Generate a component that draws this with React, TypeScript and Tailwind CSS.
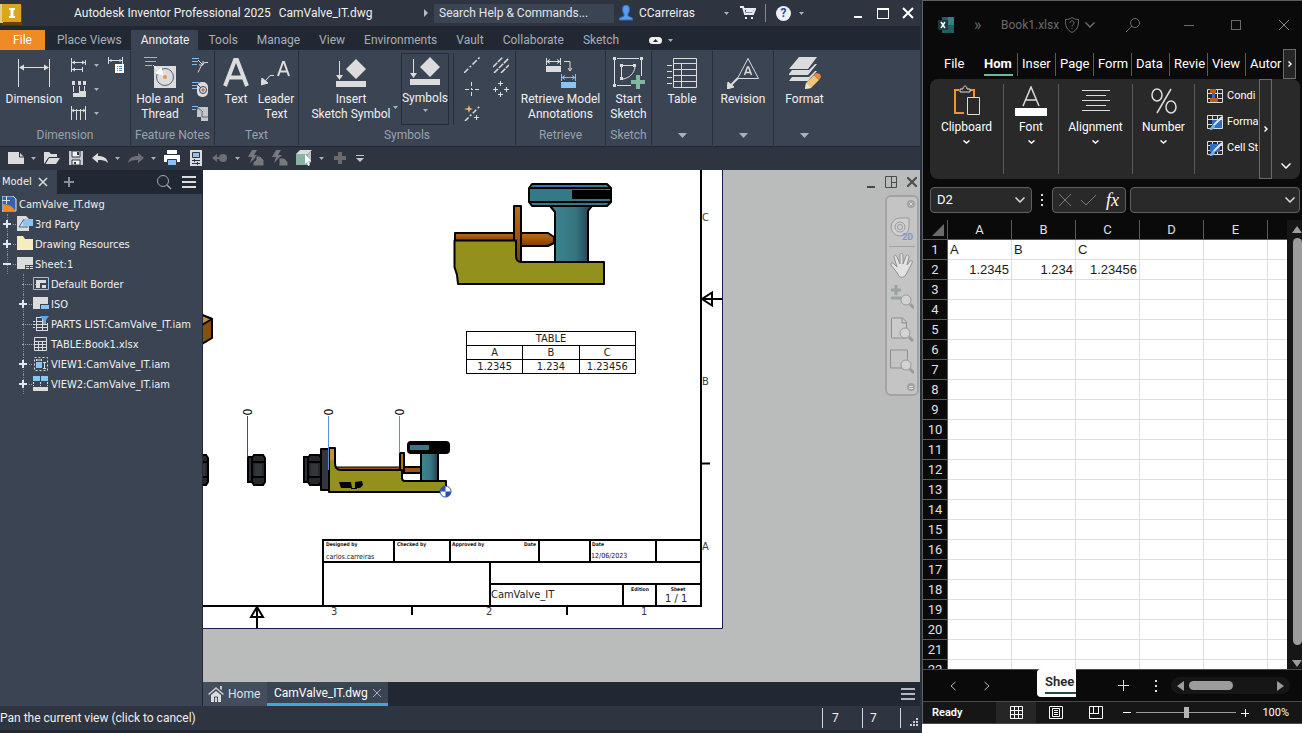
import {ReactNode} from "react";
import clsx from "clsx";

const RIBBON_TABS = ["Place Views", "Annotate", "Tools", "Manage", "View", "Environments", "Vault", "Collaborate", "Sketch"];
const EXCEL_TABS = ["Inser", "Page", "Form", "Data", "Revie", "View", "Autor"];
const SHEET_COLUMNS = ["A", "B", "C", "D", "E"];
const SHEET_ROWS: Record<number, string[]> = {
    1: ["A", "B", "C"],
    2: ["1.2345", "1.234", "1.23456"],
};

type IconProps = {w?: number; h?: number; children: ReactNode; className?: string};

function Icon({w = 16, h = 16, children, className}: IconProps) {
    return (
        <svg
            width={w}
            height={h}
            viewBox={`0 0 ${w} ${h}`}
            fill="none"
            stroke="#dcdcdc"
            aria-hidden="true"
            className={clsx("shrink-0", className)}
        >
            {children}
        </svg>
    );
}

function Caret({className}: {className?: string}) {
    return (
        <svg width="5" height="3" viewBox="0 0 5 3" aria-hidden="true" className={clsx("shrink-0 fill-[#a9b1bd]", className)}>
            <path d="M0 0h5L2.5 3z" />
        </svg>
    );
}

function WideCaret() {
    return (
        <svg width="9" height="5" viewBox="0 0 9 5" aria-hidden="true" className="fill-[#a9b1bd]">
            <path d="M0 0h9L4.500 5z" />
        </svg>
    );
}

function Chevron({className}: {className?: string}) {
    return (
        <svg width="10" height="6" viewBox="0 0 10 6" fill="none" strokeWidth="1.500" aria-hidden="true" className={clsx("shrink-0", className)}>
            <path d="M.5.5 5 5 9.500.5" />
        </svg>
    );
}

/* ---------- Inventor: title bar ---------- */

function TitleBar() {
    return (
        <header className="h-[26px] shrink-0 flex items-center bg-[#2e3440] text-xs text-[#f0f0f0] overflow-hidden">
            <svg width="24" height="26" viewBox="0 0 24 26" aria-hidden="true" className="shrink-0">
                <path d="M0 5h22v20H2z" fill="#6b430c" />
                <path d="M0 4h3v19H0z" fill="#e8c98d" />
                <path d="M2 4h19v18H2z" fill="#dba520" />
                <path d="M9 8h6v2h-1.500v6H15v2H9v-2h1.500v-6H9z" fill="#fff" />
            </svg>
            <div className="flex-1 flex gap-2 pl-[50px] pb-px whitespace-nowrap">
                <span>Autodesk Inventor Professional 2025</span>
                <span>CamValve_IT.dwg</span>
            </div>
            <svg width="4" height="8" viewBox="0 0 4 8" aria-hidden="true" className="mr-[6px] fill-[#b5bbc5]">
                <path d="M0 0v8l4-4z" />
            </svg>
            <input
                aria-label="Search Help & Commands"
                placeholder="Search Help & Commands..."
                className="w-[180px] h-[19px] px-[5px] bg-[#3b4453] placeholder:text-[#e4e6ea] outline-none"
            />
            <button className="w-[120px] pl-[5px] flex items-center gap-[6px]">
                <svg width="14" height="16" viewBox="0 0 14 16" aria-hidden="true">
                    <path d="M3.500 4a3.500 4 0 0 1 7 0c0 3-1 4-1.500 5v2l4.500 2 .5 2H0l.5-2L5 11V9C4.500 8 3.500 7 3.500 4z" fill="#5b9ded" stroke="#2f66c0" />
                </svg>
                CCarreiras
                <Caret className="ml-auto mr-[5px]" />
            </button>
            <button aria-label="Cart" className="w-[31px] pr-1 flex justify-center">
                <Icon>
                    <path d="M0 2h3l2 7h8l2-5H4" strokeWidth="2" stroke="#e8ecf5" />
                    <path d="M6 6h7" stroke="#e8ecf5" strokeWidth="3" />
                    <path d="M5 13h2M11 13h2" strokeWidth="2" stroke="#e8ecf5" />
                </Icon>
            </button>
            <span className="w-px h-[18px] bg-[#858a92]" />
            <button aria-label="Help" className="w-[42px] pl-[10px] flex items-center gap-2">
                <span className="w-[15px] h-[15px] rounded-full bg-[#f0f1f4] text-[#2648a8] text-xs leading-[15px] font-bold">?</span>
                <Caret />
            </button>
            <div className="flex items-center pl-[46px] pr-[6px] gap-[13px]">
                <button aria-label="Minimize" className="w-2 h-[10px] mr-[2px] border-b-2 border-white" />
                <button aria-label="Maximize" className="w-3 h-[11px] border border-t-2 border-white" />
                <button aria-label="Close">
                    <Icon w={12} h={12}>
                        <path d="m1 1 10 10M11 1 1 11" stroke="#fff" strokeWidth="2" />
                    </Icon>
                </button>
            </div>
        </header>
    );
}

function RibbonTabs() {
    return (
        <nav className="flex items-end h-6 shrink-0 bg-[#222833] text-xs text-[#a8aeb8]">
            <button className="w-[45px] mr-[2px] h-5 bg-[#f08a24] text-white">File</button>
            {RIBBON_TABS.map((tab) => (
                <button
                    key={tab}
                    className={clsx("h-5 pl-[10px] pr-[9px] whitespace-nowrap", tab === "Annotate" && "bg-[#3b4453] text-[#f0f0f0]")}
                >
                    {tab}
                </button>
            ))}
            <button aria-label="Ribbon display" className="h-5 pl-[21px] flex items-center gap-[6px]">
                <span className="w-[13px] h-[7px] rounded-sm bg-[#f0f0f0] flex items-center justify-center">
                    <svg width="5" height="3" viewBox="0 0 5 3" aria-hidden="true" className="fill-[#222833]">
                        <path d="M0 3h5L2.500 0z" />
                    </svg>
                </span>
                <Caret />
            </button>
        </nav>
    );
}

/* ---------- Inventor: ribbon ---------- */

function Panel({title, className, children}: {title?: string; className: string; children: ReactNode}) {
    return (
        <section className={clsx("shrink-0 h-[94px] my-px flex flex-col border-r border-[#262d39]", className)}>
            <div className="flex flex-1 pt-[6px]">{children}</div>
            <footer className="h-5 flex items-center justify-center text-[#9aa2ae] leading-4 whitespace-nowrap">
                {title ?? <WideCaret />}
            </footer>
        </section>
    );
}

function BigButton({icon, lines, className}: {icon: ReactNode; lines: string[]; className: string}) {
    return (
        <button className={clsx("flex flex-col items-center text-[#f0f0f0] leading-[15px] whitespace-nowrap", className)}>
            <span className="h-8 mb-[3px] flex items-center">{icon}</span>
            {lines.map((line) => (
                <span key={line}>{line}</span>
            ))}
        </button>
    );
}

const InsertIcon = () => (
    <Icon w={30} h={30}>
        <path d="M3.500 3v16" />
        <path d="M0 17h7l-3.500 5z" fill="#dcdcdc" stroke="none" />
        <path d="m20 1 10 10-10 10-10-10zM0 23h30v6H0z" fill="#dcdcdc" stroke="none" />
    </Icon>
);

function Ribbon() {
    return (
        <div className="flex h-24 shrink-0 bg-[#3b4453] text-xs overflow-hidden">
            <Panel title="Dimension" className="w-[131px]">
                <BigButton
                    className="w-[68px]"
                    lines={["Dimension"]}
                    icon={
                        <Icon w={34} h={32}>
                            <path d="M1.500 2v28M32.500 2v28M3 10.500h28" />
                            <path d="M2 10.500l5-3v6zM32 10.500l-5-3v6z" fill="#dcdcdc" stroke="none" />
                        </Icon>
                    }
                />
                <div className="flex flex-col pl-[3px] gap-2">
                    <div className="flex items-center gap-[7px]">
                        <Icon>
                            <path d="M.5 1v14M.5 5.500h14M.5 12.500h11M14.500 3v5M11.500 10v5" />
                            <path d="M1 5.500l3-2v4zM1 12.500l3-2v4zM14 5.500l-3-2v4z" fill="#dcdcdc" stroke="none" />
                        </Icon>
                        <Caret />
                    </div>
                    <div className="flex items-center gap-[7px]">
                        <Icon>
                            <path d="M1 0h3v4H1zM7 0h3v4H7zM12 0h3v4h-3zM2 16v-4h6v-2h7v6z" fill="#dcdcdc" stroke="none" />
                            <path d="M2.500 5v6M8.500 5v5M13.500 5v5" />
                        </Icon>
                        <Caret />
                    </div>
                    <div className="flex items-center gap-[7px]">
                        <Icon>
                            <path d="M.5 1v14M5.500 4v11M9.500 4v11M14.500 1v14M1 5.500h13" />
                            <path d="m3 4-2 1.500L3 7M12 4l2 1.500L12 7" />
                        </Icon>
                        <Caret />
                    </div>
                </div>
                <Icon className="ml-[9px]">
                    <path d="M.5 0v7M14.500 0v7M1 3.500h13M3 2v3M12 2v3" />
                    <path d="M7 7h9v9H7z" fill="#fff" stroke="none" />
                    <path d="M9 9.500h1m1 0h3M9 11.500h1m1 0h3M9 13.500h1m1 0h3" stroke="#3d8bd8" />
                </Icon>
            </Panel>

            <Panel title="Feature Notes" className="w-[84px]">
                <BigButton
                    className="w-[58px]"
                    lines={["Hole and", "Thread"]}
                    icon={
                        <Icon w={32} h={32}>
                            <path d="M10 9h22v22H10z" fill="#dcdcdc" stroke="none" />
                            <circle cx="21" cy="20" r="8.500" stroke="#56606f" />
                            <circle cx="21" cy="20" r="2" fill="#e09a4e" stroke="none" />
                            <path d="M0 .5h13M1 4.500h11M1 8.500h7" stroke="#7dbdf0" />
                            <path d="m9 8 9 9m-1-6 2 7-7-2z" stroke="#fff" fill="#fff" />
                        </Icon>
                    }
                />
                <div className="flex flex-col gap-2 pl-[3px]">
                    <Icon>
                        <path d="M0 1.500h7M0 4.500h6M0 7.500h5" stroke="#7dbdf0" />
                        <path d="m6 3 5 5m0-4v4H7M16 5.500h-3c-4 2-5 6-7 10" />
                    </Icon>
                    <Icon>
                        <rect x="5" y="1" width="11" height="15" rx="5" fill="#dcdcdc" stroke="none" />
                        <path d="M0 1.500h7M0 4.500h6M0 7.500h5" stroke="#7dbdf0" />
                        <circle cx="11" cy="9" r="3.500" stroke="#3b4453" />
                        <path d="M9 9h4M11 7v4" stroke="#c9541e" />
                        <path d="m5 3 4 4" stroke="#3b4453" />
                    </Icon>
                    <Icon>
                        <path d="M6 2h10v14H9v-4H5V6z" fill="#c4c6c9" stroke="none" />
                        <path d="M0 1.500h6M0 4.500h4" stroke="#7dbdf0" />
                        <path d="m5 2 6 5M10 7v5h6" stroke="#5c6470" />
                    </Icon>
                </div>
            </Panel>

            <Panel title="Text" className="w-[84px]">
                <BigButton
                    className="w-[42px]"
                    lines={["Text"]}
                    icon={
                        <Icon w={26} h={32}>
                            <path d="M2 29 12 3h2l10 26M6 20.500h14" strokeWidth="4" />
                        </Icon>
                    }
                />
                <BigButton
                    className="w-[38px]"
                    lines={["Leader", "Text"]}
                    icon={
                        <Icon w={30} h={32}>
                            <path d="m17 19 5-14h1l5 14M19 14.500h7" strokeWidth="2" />
                            <path d="M13 18.500H9l-6 7" />
                            <path d="m0 28 1-7 6 5z" fill="#dcdcdc" />
                        </Icon>
                    }
                />
            </Panel>

            <Panel title="Symbols" className="w-[217px]">
                <BigButton className="w-[84px] ml-[10px]" lines={["Insert", "Sketch Symbol"]} icon={<InsertIcon />} />
                <span className="flex items-end pb-4">
                    <Caret />
                </span>
                <button className="w-12 h-[72px] -mt-1 ml-[3px] pt-[2px] flex flex-col items-center border border-[#262d39] text-[#f0f0f0]">
                    <InsertIcon />
                    <span className="mt-[5px] leading-[15px]">Symbols</span>
                    <Caret className="mt-[3px]" />
                </button>
                <span className="w-px h-[72px] ml-1 -mt-1 bg-[#262d39]" />
                <div className="grid grid-cols-2 gap-x-[13px] gap-y-2 content-start pl-[10px]">
                    <Icon>
                        <path d="M0 16 16 0" strokeDasharray="6 2 2 2" strokeWidth="1.500" />
                    </Icon>
                    <Icon>
                        <path d="M0 10 10 0M1 16 16 1M8 16l8-8" strokeDasharray="6 1" strokeWidth="1.500" />
                    </Icon>
                    <Icon>
                        <path d="M7.500 1v4m0 2v2m0 2v4M1 8.500h4m2 0h2m2 0h4" />
                    </Icon>
                    <Icon>
                        <path d="M7.500 0v5M5 2.500h5M7.500 11v5M5 13.500h5M0 8.500h5M2.500 6v5M11 8.500h5M13.500 6v5" />
                    </Icon>
                    <Icon>
                        <path d="M1 16 16 1" strokeDasharray="5 2 2 2" strokeWidth="1.500" />
                        <path d="m5 0 1 3 3 1-3 1-1 3-1-3-4-1 4-1z" fill="#f2b95f" stroke="none" />
                        <path d="M12.500 10v5M10 12.500h5" />
                    </Icon>
                </div>
            </Panel>

            <Panel title="Retrieve" className="w-[90px]">
                <BigButton
                    className="w-[89px]"
                    lines={["Retrieve Model", "Annotations"]}
                    icon={
                        <Icon w={30} h={32}>
                            <path d="M.5 1v7M14.500 1v7M1 4.500h13M4 2.500l-3 2 3 2M11 2.500l3 2-3 2M18 4.500h6V13m-2-2 2 3 2-3" />
                            <path d="M0 9h15v6H0z" fill="#dcdcdc" stroke="none" />
                            <path d="M15.500 17v7M29.500 17v7M16 20.500h13M19 18.500l-3 2 3 2M26 18.500l3 2-3 2" stroke="#7dbdf0" />
                            <path d="M15 25h15v6H15z" fill="#8ac4f5" stroke="none" />
                        </Icon>
                    }
                />
            </Panel>

            <Panel title="Sketch" className="w-[46px]">
                <BigButton
                    className="w-[45px]"
                    lines={["Start", "Sketch"]}
                    icon={
                        <Icon w={32} h={32}>
                            <path d="M1.500 3v25M28.500 3v16M4 1.500h22M4 28.500h14" />
                            <path d="M8.500 9v13M10 8.500h11M22 10c-1 7-6 11-12 12" />
                            <path d="M0 0h3v3H0zM27 0h3v3h-3zM0 27h3v3H0zM7 7h3v3H7zM20 7h3v3h-3zM7 20h3v3H7z" fill="#dcdcdc" stroke="none" />
                            <path d="M23 18h4v5h5v4h-5v5h-4v-5h-5v-4h5z" fill="#7fb8a0" stroke="none" />
                        </Icon>
                    }
                />
            </Panel>

            <Panel className="w-[61px]">
                <BigButton
                    className="w-[60px]"
                    lines={["Table"]}
                    icon={
                        <Icon w={30} h={32}>
                            <path d="M6.500 1.500h23v29h-23zM6 6.500h24M6 12.500h24M6 18.500h24M6 24.500h24M14.500 6v24M0 8.500h5M0 14.500h5M0 20.500h5M0 26.500h5" />
                        </Icon>
                    }
                />
            </Panel>

            <Panel className="w-[61px]">
                <BigButton
                    className="w-[60px]"
                    lines={["Revision"]}
                    icon={
                        <Icon w={32} h={32}>
                            <path d="M21 1.500 31.500 21.500h-21z" />
                            <path d="m17.500 18 3-8h1l3 8M18.500 15.500h5" strokeWidth="1.500" />
                            <path d="m11 21-8 8" strokeWidth="2" />
                            <path d="m0 32 1-7 6 5z" fill="#dcdcdc" />
                        </Icon>
                    }
                />
            </Panel>

            <Panel className="w-[61px] border-r-0">
                <BigButton
                    className="w-[61px]"
                    lines={["Format"]}
                    icon={
                        <Icon w={32} h={32}>
                            <path d="M10 0h18l-9 12H0zM0 17l3-4h17l6-6h2l-9 11H0zM0 24l3-4h17l6-6h2l-9 10H0z" fill="#dcdcdc" stroke="none" />
                            <path d="m16 32 1-6 8-8 5 5-8 8z" fill="#f2c479" stroke="none" />
                            <path d="m25 18 2-2 4 1 1 3-2 3z" fill="#e88a3a" stroke="none" />
                            <path d="m16 32 1-6 5 5z" fill="#e6e6e6" stroke="none" />
                        </Icon>
                    }
                />
            </Panel>
        </div>
    );
}

function QuickItem({label, caret, children}: {label: string; caret?: boolean; children: ReactNode}) {
    return (
        <button aria-label={label} className="flex items-center">
            <Icon>{children}</Icon>
            {caret ? (
                <span className="w-5 pr-[2px] flex justify-center">
                    <Caret />
                </span>
            ) : (
                <span className="w-2" />
            )}
        </button>
    );
}

function QuickAccess() {
    return (
        <div className="h-6 shrink-0 pl-2 pb-px flex items-center bg-[#2e3440] border-t border-[#222833]">
            <QuickItem label="New" caret>
                <path d="M0 2h11l5 5v7H0z" fill="#dcdcdc" stroke="none" />
                <path d="M11.500 2v5H16" stroke="#2e3440" />
            </QuickItem>
            <QuickItem label="Open">
                <path d="M0 14V2h5l2 2h6v3H5z" fill="#dcdcdc" stroke="none" />
                <path d="M5 8h11l-4 6H1z" fill="#dcdcdc" stroke="none" />
                <path d="M5 7.500h11M4.500 8 1 14" stroke="#2e3440" />
            </QuickItem>
            <QuickItem label="Save">
                <path d="M1 1h14v14H1z" fill="#c9ccd0" stroke="none" />
                <path d="M4 1h8v6H4zM4 10h8v5H4z" fill="#f4f4f4" stroke="#2e3440" />
                <path d="M9 2h2v3H9zM6 12h2v2H6z" fill="#2e3440" stroke="none" />
            </QuickItem>
            <QuickItem label="Undo" caret>
                <path d="M0 8l6-5v3c6 0 9 2 10 7-3-3-6-3-10-3v3z" fill="#dcdcdc" stroke="none" />
            </QuickItem>
            <QuickItem label="Redo" caret>
                <path d="M16 8l-6-5v3C4 6 1 8 0 13c3-3 6-3 10-3v3z" fill="#6d6f73" stroke="none" />
            </QuickItem>
            <QuickItem label="Print">
                <path d="M3 0h10v4H3zM0 5h16v7H0z" fill="#fff" stroke="none" />
                <path d="M3.500 9.500h9v6h-9z" fill="#8ac4f5" stroke="#2e3440" />
            </QuickItem>
            <QuickItem label="Properties">
                <path d="M2 0h12v16H2z" fill="#dcdcdc" stroke="none" />
                <path d="M4.500 2.500h7v5h-7z" fill="#8ac4f5" stroke="#2e3440" />
                <path d="M4 10.500h8M4 13.500h8M6.500 9v3M9.500 12v3" stroke="#2e3440" />
            </QuickItem>
            <QuickItem label="Previous" caret>
                <path d="m0 8 5-4v3h3v2H5v3z" fill="#6d6f73" stroke="none" />
                <circle cx="11" cy="8" r="4" fill="#6d6f73" stroke="none" />
            </QuickItem>
            <QuickItem label="Update sheet">
                <path d="m4 0h5L6 5h4L2 13l2-6H0z" fill="#77797d" stroke="none" />
                <path d="M8 10V6h4l4 4v6H5v-4z" fill="#77797d" stroke="#2e3440" />
            </QuickItem>
            <QuickItem label="Update all">
                <path d="m4 0h5L6 5h4L2 13l2-6H0z" fill="#77797d" stroke="none" />
                <path d="M7 8h5l4 4v4H7z" fill="#77797d" stroke="#2e3440" />
            </QuickItem>
            <QuickItem label="Selection filter" caret>
                <path d="M4 0h12l-4 4H0z" fill="#dcdcdc" stroke="none" />
                <path d="M0 4h12v11H0z" fill="#86b3a2" stroke="none" />
                <path d="M12 4l3-3v11l-3 3z" fill="#b9c0bf" stroke="none" />
                <path d="m9 4 6 7h-3l2 4-2 1-1-4-2 2z" fill="#fff" stroke="none" />
            </QuickItem>
            <QuickItem label="Add">
                <path d="M6 2h4v4h4v4h-4v4H6v-4H2V6h4z" fill="#6d6b68" stroke="none" />
            </QuickItem>
            <button aria-label="Customize">
                <svg width="8" height="7" viewBox="0 0 8 7" aria-hidden="true" className="fill-[#c3c8cf]">
                    <path d="M0 0h8v1H0zM0 3h8L4 7z" />
                </svg>
            </button>
        </div>
    );
}

/* ---------- Inventor: model browser ---------- */

type TreeNode = {label: string; level: number; sign?: string; icon: ReactNode};

const TREE: TreeNode[] = [
    {
        label: "3rd Party",
        level: 1,
        sign: "+",
        icon: (
            <>
                <path d="M0 0h9l3 3v12H0z" fill="#dcdcdc" stroke="none" />
                <path d="M6 3h10v7H6z" fill="#8ac4f5" stroke="none" />
                <path d="M7 3 2 11h9" stroke="#2d6ca8" />
            </>
        ),
    },
    {
        label: "Drawing Resources",
        level: 1,
        sign: "+",
        icon: <path d="M0 0h6l2 3h8v11H0z" fill="#f5ecc0" stroke="none" />,
    },
    {
        label: "Sheet:1",
        level: 1,
        sign: "-",
        icon: (
            <>
                <path d="M0 1h16v12H0z" fill="#dcdcdc" stroke="none" />
                <path d="M8 9h8v4H8z" fill="#3b4453" stroke="none" />
                <path d="M9 10.500h3m1 0h3M9 12.500h3m1 0h3" />
            </>
        ),
    },
    {
        label: "Default Border",
        level: 2,
        icon: (
            <>
                <path d="M.5 1.500h15v12H.5z" stroke="#8ac4f5" />
                <path d="M3 4h10v3H7v5H3zM9 9h4v3H9z" fill="#dcdcdc" stroke="none" />
            </>
        ),
    },
    {
        label: "ISO",
        level: 2,
        sign: "+",
        icon: (
            <>
                <path d="M0 1h15v7H7v5H0z" fill="#dcdcdc" stroke="none" />
                <path d="M8 9h8v4H8z" fill="#8ac4f5" stroke="none" />
            </>
        ),
    },
    {
        label: "PARTS LIST:CamValve_IT.iam",
        level: 2,
        icon: (
            <>
                <path d="M3.500 1v14M9.500 1v14M14.500 7v8M3 1.500h6M3 5.500h7M3 8.500h12M3 11.500h12M3 14.500h12M0 5.500h2M0 8.500h2M0 11.500h2" />
                <path d="M7 0h9l-3 4v4h-3V4z" fill="#5ba9ea" stroke="none" />
            </>
        ),
    },
    {
        label: "TABLE:Book1.xlsx",
        level: 2,
        icon: <path d="M1.500 1.500h12v13h-12zM1 5.500h12M1 8.500h12M1 11.500h12M5.500 5v9M9.500 5v9" />,
    },
    {
        label: "VIEW1:CamValve_IT.iam",
        level: 2,
        sign: "+",
        icon: (
            <>
                <path d="M1.500 1.500h13v13h-13z" strokeDasharray="2 2" />
                <path d="M3 6h6v6H3z" fill="#8ac4f5" stroke="none" />
                <path d="M3 4h6M11.500 7v5M10 6.500h3M10 12.500h3M3.500 3v2M8.500 3v2" />
            </>
        ),
    },
    {
        label: "VIEW2:CamValve_IT.iam",
        level: 2,
        sign: "+",
        icon: (
            <>
                <path d="M0 0h7v5H0zM8 0h7v5H8z" fill="#8ac4f5" stroke="none" />
                <path d="M.5 6v4M14.500 6v4M7.500 6v4" strokeDasharray="2 1" />
                <path d="M0 11h15v4H0z" fill="#dcdcdc" stroke="none" />
            </>
        ),
    },
];

function Expander({sign}: {sign?: string}) {
    if (!sign) {
        return <span className="w-[14px] -ml-[2px] border-b border-dotted border-[#9aa2ae]" />;
    }
    return (
        <button aria-label={sign === "+" ? "Expand" : "Collapse"} className="w-[14px] -ml-[5px] mr-[3px]">
            <Icon w={14} h={8}>
                <path d={sign === "+" ? "M0 4h8M4 0v8" : "M0 4h8"} stroke="#e4e8ee" strokeWidth="2" />
                <path d="M10 4.500h4" stroke="#9aa2ae" strokeDasharray="1 1" />
            </Icon>
        </button>
    );
}

function ModelBrowser() {
    return (
        <aside className="w-[203px] shrink-0 flex flex-col bg-[#3b4453] border-r border-[#222833] text-[#f0f0f0]">
            <div className="h-6 flex items-center bg-[#222833] text-[11px]">
                <div className="w-[57px] h-full pl-[2px] flex items-center gap-[6px] bg-[#3b4453] font-['DejaVu_Sans_Condensed','Noto_Sans',sans-serif]">
                    Model
                    <button aria-label="Close panel">
                        <Icon w={10} h={10}>
                            <path d="m1 1 8 8M9 1 1 9" strokeWidth="1.500" />
                        </Icon>
                    </button>
                </div>
                <button aria-label="Add panel" className="pl-[7px]">
                    <Icon w={10} h={10}>
                        <path d="M0 5h10M5 0v10" stroke="#8b8f96" strokeWidth="2" />
                    </Icon>
                </button>
                <button aria-label="Search" className="ml-auto">
                    <Icon>
                        <circle cx="7" cy="7" r="5.500" stroke="#a5a8ad" />
                        <path d="m11 11 4 4" stroke="#a5a8ad" strokeWidth="1.500" />
                    </Icon>
                </button>
                <button aria-label="Menu" className="pl-[10px] pr-[6px]">
                    <Icon w={14} h={12}>
                        <path d="M0 1h14M0 6h14M0 11h14" strokeWidth="2" />
                    </Icon>
                </button>
            </div>
            <ul className="text-[11px] leading-5 font-['DejaVu_Sans_Condensed','Noto_Sans',sans-serif] whitespace-nowrap">
                <li className="h-5 pl-[2px] flex items-center gap-[2px]">
                    <Icon w={15} h={16}>
                        <path d="M0 0h11l3 3v12H0z" fill="#2f62b5" stroke="#e6e6e6" />
                        <path d="M1 8c5 0 9 2 12 6v1H1z" fill="#f08a24" stroke="none" />
                        <path d="M0 4.500h8M4.500 0v8" />
                    </Icon>
                    <span className="pt-[2px]">CamValve_IT.dwg</span>
                </li>
                {TREE.map(({label, level, sign, icon}) => (
                    <li
                        key={label}
                        className={clsx("h-5 flex items-center border-l border-dotted border-[#7f8895]", level === 1 ? "ml-[7px]" : "ml-[23px]")}
                    >
                        <Expander sign={sign} />
                        <Icon className="-ml-[3px]">{icon}</Icon>
                        <span className="pt-[2px] pl-[2px]">{label}</span>
                    </li>
                ))}
            </ul>
        </aside>
    );
}

/* ---------- Inventor: drawing sheet ---------- */

function OrdinateMark({x, bottom, color}: {x: number; bottom: number; color: string}) {
    return (
        <g>
            <path d={`M${x - 0.5} 416V${bottom}`} stroke={color} strokeWidth="1" />
            <text x={x} y="412" transform={`rotate(-90 ${x} 412)`} textAnchor="middle" dominantBaseline="central" fontSize="12">
                0
            </text>
        </g>
    );
}

function HexNut({x}: {x: number}) {
    return (
        <g transform={`translate(${x} 454)`} strokeWidth="2" stroke="#000">
            <path d="M1 3h5v25H1z" fill="#2c2f3d" />
            <path d="M7 1h9l2 3v24l-2 3H7l-2-3V4z" fill="#26282c" />
            <path d="M6 8h11M6 23h11" />
            <path d="M8 10h7v12H8z" fill="#34373a" stroke="none" />
        </g>
    );
}

function DrawingSheet() {
    return (
        <svg
            width="717"
            height="512"
            viewBox="203 170 717 512"
            className="block font-['DejaVu_Sans_Condensed','Noto_Sans',sans-serif]"
            aria-label="CamValve_IT drawing sheet"
        >
            <defs>
                <linearGradient id="stem">
                    <stop offset="0" stopColor="#3d8793" />
                    <stop offset=".6" stopColor="#357580" />
                    <stop offset=".8" stopColor="#2c5a68" />
                    <stop offset=".9" stopColor="#3a3f55" />
                    <stop offset="1" stopColor="#2c5a68" />
                </linearGradient>
                <linearGradient id="rod" x2="0" y2="1">
                    <stop offset="0" stopColor="#b5701a" />
                    <stop offset=".5" stopColor="#a5540a" />
                    <stop offset="1" stopColor="#74400c" />
                </linearGradient>
            </defs>

            <path d="M203 170h519v458H203z" fill="#fff" />
            <path d="M722.500 170v458.500H203" fill="none" stroke="#1b1b52" />
            <path d="M701 170v437M203 606h499M701 463.500h9M412 606v9M567 606v9" fill="none" stroke="#000" strokeWidth="2" />
            <path d="M722 299h-20m10-6.500-10 6.500 10 6.500zM257 628v-20m-6 9 6-10 6 10z" fill="none" stroke="#000" strokeWidth="2" />
            <g fontSize="11" fill="#3a3a3a">
                <text x="702" y="221">C</text>
                <text x="702" y="385">B</text>
                <text x="702" y="550">A</text>
                <text x="331" y="615">3</text>
                <text x="486" y="615">2</text>
                <text x="641" y="615">1</text>
            </g>

            {/* enlarged view */}
            <g stroke="#000" strokeWidth="2" strokeLinejoin="round">
                <path d="M455 233h60v8h-60z" fill="url(#rod)" />
                <path d="M521 233h27l6 4v6l-6 3h-27z" fill="url(#rod)" />
                <path d="M514 206h7v57h-7z" fill="url(#rod)" />
                <path d="M454.500 240.500H516v16c0 3 2 5.500 5 5.500h83v22H458l-1-9-2.500-8z" fill="#93901c" />
                <path d="M550 206h42l-4 5v51h-33v-50z" fill="url(#stem)" />
                <path d="M532 184h75l4 4v14l-4 4h-75l-3-4v-14z" fill="#357986" />
                <path d="M536 186h46" stroke="#3f6fb8" />
                <path d="M530 188h80M530 202h80" />
                <path d="M572 190h39v9h-39z" fill="#000" stroke="none" />
            </g>

            {/* side view */}
            <g stroke="#000" strokeWidth="2" strokeLinejoin="round">
                <path d="m202 315 10 4v19l-10 6z" fill="#87500f" />
                <path d="m202 315 10 4-10 6z" fill="#c98f28" />
                <path d="M336 467h66v4h-66z" fill="#9c5610" strokeWidth="1" />
                <path d="M404 467h17v6h-17z" fill="#9c5610" />
                <path d="M400 453h4v20h-4z" fill="#b5701a" />
                <path d="M329 448h6v15c0 4 2 7 6 7h61v8c0 2 1 3 3 3h41v11H329z" fill="#93901c" />
                <path d="M330 449h4v11h-4z" fill="#c9922c" stroke="none" />
                <path d="M421 453h17v28h-17z" fill="url(#stem)" />
                <rect x="408" y="442" width="41" height="11" rx="3" fill="#000" />
                <path d="M410 445h19v5h-19z" fill="#357986" stroke="none" />
                <path d="M321 449h8v41h-8z" fill="#34363f" />
            </g>
            <path d="M339 482h12l1 6h-11zM355 482l7-1 1 4-3 3h-5zM351 488h6v1h-6z" fill="#000" />
            <HexNut x={247} />
            <HexNut x={190} />
            <HexNut x={303} />
            <OrdinateMark x={248} bottom={457} color="#2b4fb0" />
            <OrdinateMark x={329} bottom={470} color="#5b92e0" />
            <OrdinateMark x={400} bottom={453} color="#5b92e0" />
            <circle cx="445.500" cy="491.500" r="5.500" fill="#fff" stroke="#2b4fb0" />
            <path d="M445.500 491.500v-5.500a5.500 5.500 0 0 0-5.500 5.500zM445.500 491.500v5.500a5.500 5.500 0 0 0 5.500-5.500z" fill="#2b4fb0" />

            {/* title block */}
            <path
                d="M323 606v-66h378M323 562h378M394 540v22M450 540v22M539 540v22M590 540v22M656 540v22M490 562v44M490 584h211M623 584v22M656 584v22"
                fill="none"
                stroke="#000"
                strokeWidth="2"
            />
            <g fontSize="5" fontWeight="bold" fill="#111">
                <text x="326" y="546">Designed by</text>
                <text x="397" y="546">Checked by</text>
                <text x="452" y="546">Approved by</text>
                <text x="536" y="546" textAnchor="end">
                    Date
                </text>
                <text x="592" y="546">Date</text>
                <text x="640" y="591" textAnchor="middle">
                    Edition
                </text>
                <text x="678" y="591" textAnchor="middle">
                    Sheet
                </text>
            </g>
            <g fontSize="7" fill="#111">
                <text x="326" y="559">carlos.carreiras</text>
                <text x="591" y="558">12/06/2023</text>
            </g>
            <g fontSize="11" fill="#222">
                <text x="491" y="598">CamValve_IT</text>
                <text x="665" y="602">1 / 1</text>
            </g>
        </svg>
    );
}

function PartsTable() {
    return (
        <table className="absolute left-[263px] top-[161px] w-[170px] table-fixed border-collapse text-center text-[11px] leading-[13px] text-[#222] font-['DejaVu_Sans_Condensed','Noto_Sans',sans-serif] [&_td]:border [&_td]:border-black [&_td]:p-0 [&_th]:border [&_th]:border-black [&_th]:p-0 [&_th]:font-normal">
            <thead>
                <tr>
                    <th colSpan={3}>TABLE</th>
                </tr>
                <tr>
                    {SHEET_ROWS[1].map((name) => (
                        <th key={name}>{name}</th>
                    ))}
                </tr>
            </thead>
            <tbody>
                <tr>
                    {SHEET_ROWS[2].map((value) => (
                        <td key={value}>{value}</td>
                    ))}
                </tr>
            </tbody>
        </table>
    );
}

function NavigationBar() {
    return (
        <div className="absolute right-px top-[25px] w-[34px] h-[201px] py-[3px] flex flex-col items-center rounded-md border-2 border-[#a3a3a3] bg-[#c4c4c4]">
            <button aria-label="Close navigation bar" className="self-end mr-[2px]">
                <Icon w={8} h={8}>
                    <circle cx="4" cy="4" r="4" fill="#a5a1a1" stroke="none" />
                    <path d="m2.500 2.500 3 3m0-3-3 3" stroke="#ddd" />
                </Icon>
            </button>
            <button aria-label="2D wheel" className="mt-[9px]">
                <Icon w={24} h={24}>
                    <path d="M1 10a9 9 0 0 1 9-9h9v9a9 9 0 0 1-18 0z" fill="#cfcfcf" stroke="#9a9a9a" />
                    <circle cx="10" cy="10" r="5" stroke="#9a9a9a" />
                    <circle cx="10" cy="10" r="2.500" stroke="#9a9a9a" />
                    <text x="12" y="23" fontSize="9" fontWeight="bold" fill="#7f96d0" stroke="none">
                        2D
                    </text>
                </Icon>
            </button>
            <span className="w-[26px] h-px my-[5px] bg-[#a3a3a3]" />
            <button aria-label="Pan">
                <Icon w={24} h={26}>
                    <path
                        d="M8 22 1 13c-1-2 1-3 3-1l3 3L4 5c0-2 2-3 3 0l3 7V3c0-2 3-2 3 0v9l3-8c1-2 3-1 3 1l-2 8 3-4c2-1 3 0 2 2l-4 8-3 5c-2 2-6 2-7-2z"
                        fill="#e2e2e2"
                        stroke="#8f8f8f"
                    />
                </Icon>
            </button>
            <button aria-label="Zoom" className="mt-[6px]">
                <Icon w={24} h={26}>
                    <path d="M1 6h10M6 1v10M1 14h10" stroke="#9aa3a3" strokeWidth="3" />
                    <circle cx="16" cy="16" r="5" fill="#d4d4d4" stroke="#999" />
                    <path d="m20 20 4 4" stroke="#999" strokeWidth="3" />
                </Icon>
            </button>
            <button aria-label="Zoom all" className="mt-[6px]">
                <Icon w={24} h={26}>
                    <path d="M1.500 2h11l4 4v16h-15zM12 2v5h4" fill="#cbcbcb" stroke="#8f8f8f" />
                    <circle cx="15" cy="17" r="5" fill="#d4d4d4" stroke="#999" />
                    <path d="m19 21 4 4" stroke="#999" strokeWidth="3" />
                </Icon>
            </button>
            <button aria-label="Zoom window" className="mt-[6px]">
                <Icon w={24} h={26}>
                    <path d="M.5 2h17v18H.5z" stroke="#8f8f8f" />
                    <circle cx="16" cy="17" r="5" fill="#d4d4d4" stroke="#999" />
                    <path d="m20 21 4 4" stroke="#999" strokeWidth="3" />
                </Icon>
            </button>
            <button aria-label="Navigation options" className="mt-auto self-end mr-[2px]">
                <Icon w={8} h={8}>
                    <circle cx="4" cy="4" r="4" fill="#a5a1a1" stroke="none" />
                    <path d="M2 3.500h4M2 5.500h4" stroke="#ddd" />
                </Icon>
            </button>
        </div>
    );
}

function DrawingCanvas() {
    return (
        <main className="relative flex-1 min-h-0 overflow-hidden bg-[#babcbb]">
            <DrawingSheet />
            <PartsTable />
            <div className="absolute right-[3px] top-[6px] flex items-center gap-[10px]">
                <button aria-label="Minimize drawing" className="w-2 h-3 border-b-2 border-[#4a4a4a]" />
                <button aria-label="Arrange drawings">
                    <Icon w={12} h={12}>
                        <path d="M.5.5h11v11H.5zM6.500 0v12M7 6.500h5" stroke="#4a4a4a" />
                    </Icon>
                </button>
                <button aria-label="Close drawing">
                    <Icon w={10} h={10}>
                        <path d="m0 0 10 10M10 0 0 10" stroke="#4a4a4a" strokeWidth="2" />
                    </Icon>
                </button>
            </div>
            <NavigationBar />
        </main>
    );
}

function DocumentTabs() {
    return (
        <div className="h-6 shrink-0 flex bg-[#222833] text-xs">
            <button className="w-16 pl-[5px] flex items-center gap-1 bg-[#434d5e] text-[#dfe3e8]">
                <Icon>
                    <path d="M0 8 8 1l8 7-1 1-7-6-7 6zM12 0h2v4l-2-1z" fill="#c9c9c9" stroke="none" />
                    <path d="m3 9 5-4 5 4v7H3z" fill="#dcdcdc" stroke="none" />
                    <path d="M6.500 16v-5h3v5" stroke="#434d5e" />
                </Icon>
                Home
            </button>
            <div className="w-[121px] pl-[7px] flex items-center gap-[5px] bg-[#3b4453] text-white border-b-[3px] border-[#45a3dd]">
                CamValve_IT.dwg
                <button aria-label="Close tab">
                    <Icon w={8} h={8}>
                        <path d="m0 0 8 8M8 0 0 8" stroke="#aeb3bb" />
                    </Icon>
                </button>
            </div>
            <button aria-label="Tab list" className="ml-auto mr-[5px]">
                <Icon w={14} h={12}>
                    <path d="M0 1h14M0 6h14M0 11h14" stroke="#b4bac4" strokeWidth="2" />
                </Icon>
            </button>
        </div>
    );
}

function InventorWindow() {
    return (
        <div className="min-w-0 h-full flex flex-col bg-[#222833] border-r-2 border-[#2a303b]">
            <TitleBar />
            <RibbonTabs />
            <Ribbon />
            <QuickAccess />
            <div className="flex-1 min-h-0 flex">
                <ModelBrowser />
                <div className="flex-1 min-w-0 flex flex-col">
                    <DrawingCanvas />
                    <DocumentTabs />
                </div>
            </div>
            <footer className="h-[27px] shrink-0 pb-[3px] flex bg-[#222833] text-xs text-[#f0f0f0]">
                <div className="flex-1 flex items-center bg-[#2e3440]">
                    <span className="flex-1">Pan the current view (click to cancel)</span>
                    <span className="w-10 h-5 pl-[9px] leading-5 border-l border-[#d0d3d8]">7</span>
                    <span className="w-[38px] h-5 pl-[7px] leading-5 border-l border-[#d0d3d8]">7</span>
                    <span className="w-5 h-5 border-l border-[#d0d3d8] flex items-end justify-end">
                        <Icon w={10} h={10}>
                            <path d="M6 0h2v2H6zM3 3h2v2H3zM6 3h2v2H6zM0 6h2v2H0zM3 6h2v2H3zM6 6h2v2H6z" fill="#c9ccd1" stroke="none" />
                        </Icon>
                    </span>
                </div>
            </footer>
        </div>
    );
}

/* ---------- Excel ---------- */

function ExcelTitle() {
    return (
        <header className="h-12 shrink-0 pl-[15px] pr-[13px] flex items-center text-xs text-[#6b6b6b]">
            <svg width="16" height="16" viewBox="0 0 16 16" aria-hidden="true">
                <path d="M4 0h12v16H4z" fill="#1f5f61" />
                <path d="M10 0h6v8h-6z" fill="#2f8584" />
                <path d="M0 3h10v10H0z" fill="#1c3b40" />
                <path d="m3 5 4 6m0-6-4 6" stroke="#fff" strokeWidth="1.500" />
            </svg>
            <span className="pl-5 w-[47px] text-base leading-4">»</span>
            <span className="w-16">Book1.xlsx</span>
            <Icon w={14} h={16}>
                <path d="M7 .5c2 1.500 4 2 6.500 2C14 9 12 13 7 15.500 2 13 0 9 .5 2.500 3 2.500 5 2 7 .5z" stroke="#6b6b6b" />
                <path d="M5 6c0-3 4-3 4 0 0 1.500-2 1.500-2 3.500M7 11v1" stroke="#6b6b6b" />
            </Icon>
            <Chevron className="ml-[6px] stroke-[#6b6b6b]" />
            <button aria-label="Search" className="ml-[31px]">
                <Icon w={14} h={14}>
                    <circle cx="9" cy="5" r="4.500" stroke="#6b6b6b" />
                    <path d="m6 8-6 6" stroke="#6b6b6b" />
                </Icon>
            </button>
            <button aria-label="Minimize" className="ml-auto w-[10px] h-px bg-[#6b6b6b]" />
            <button aria-label="Maximize" className="ml-[37px] w-[10px] h-[10px] border border-[#6b6b6b]" />
            <button aria-label="Close" className="ml-[38px]">
                <Icon w={10} h={10}>
                    <path d="m0 0 10 10M10 0 0 10" stroke="#8a8a8a" />
                </Icon>
            </button>
        </header>
    );
}

function ExcelTabs() {
    return (
        <nav className="h-[30px] shrink-0 pl-[21px] pr-[6px] flex items-center text-[13px] text-white">
            <button className="w-10 text-left">File</button>
            <button className="w-[29px] h-6 mr-1 pt-[2px] text-left font-bold border-b-2 border-[#6fb79c]">Hom</button>
            {EXCEL_TABS.map((tab) => (
                <button key={tab} className="w-[38px] h-[23px] pl-1 border-l border-[#5a5a5a] text-left">
                    {tab}
                </button>
            ))}
            <button aria-label="More tabs" className="ml-auto w-[13px] h-full shrink-0 flex items-center justify-center border border-[#6b6b6b] bg-[#262626]">
                <Icon w={4} h={6}>
                    <path d="m.5.5 2.500 2.500L.5 5.500" stroke="#fff" strokeWidth="1.500" />
                </Icon>
            </button>
        </nav>
    );
}

function ExcelGroup({label, icon, className}: {label: string; icon: ReactNode; className: string}) {
    return (
        <button className={clsx("my-[5px] h-[90px] flex flex-col items-center border-r border-[#5a5a5a]", className)}>
            <span className="h-[34px] flex items-center">{icon}</span>
            <span className="mt-px leading-4">{label}</span>
            <svg width="7" height="4" viewBox="0 0 7 4" aria-hidden="true" className="mt-[5px]">
                <path d="m.5.5 3 2.500 3-2.500" fill="none" stroke="#fff" strokeWidth="1.500" />
            </svg>
        </button>
    );
}

function StyleButton({label, children}: {label: string; children: ReactNode}) {
    return (
        <button className="h-[26px] flex items-center gap-1 whitespace-nowrap text-[11px]">
            <Icon>
                <path d="M.5 1.500h15v13H.5zM5.500 1v13M10.500 1v13M0 5.500h16M0 10.500h16" />
                {children}
            </Icon>
            {label}
        </button>
    );
}

function ExcelRibbon() {
    return (
        <div className="h-[100px] shrink-0 ml-[7px] mr-[2px] flex rounded-lg bg-[#292929] text-xs text-white overflow-hidden">
            <ExcelGroup
                label="Clipboard"
                className="w-[74px]"
                icon={
                    <Icon w={28} h={32}>
                        <path d="M6 5H2v23h9M17 5h4v7" stroke="#f0932a" strokeWidth="2" />
                        <path d="M7 7V4h3c0-4 4-4 4 0h3v3zM14.500 12.500h12v17h-12z" />
                    </Icon>
                }
            />
            <ExcelGroup
                label="Font"
                className="w-[55px]"
                icon={
                    <Icon w={32} h={30}>
                        <path d="M8 20 16 1l8 19M11 14h10" strokeWidth="1.500" />
                        <path d="M0 22h32v8H0z" fill="#fff" stroke="none" />
                    </Icon>
                }
            />
            <ExcelGroup
                label="Alignment"
                className="w-[74px]"
                icon={
                    <Icon w={28} h={24}>
                        <path d="M0 1.500h28M4 6.500h20M0 11.500h28M4 16.500h20M0 21.500h28" />
                    </Icon>
                }
            />
            <ExcelGroup
                label="Number"
                className="w-[62px]"
                icon={
                    <Icon w={26} h={26}>
                        <ellipse cx="6" cy="7" rx="5" ry="6" strokeWidth="1.500" />
                        <ellipse cx="20" cy="19" rx="5" ry="6" strokeWidth="1.500" />
                        <path d="M20 1 6 25" strokeWidth="1.500" />
                    </Icon>
                }
            />
            <div className="flex-1 min-w-0 pl-3 pt-1">
                <StyleButton label="Condi">
                    <path d="M3 1h6v4H3zM3 10h8v4H3z" fill="#c05a14" stroke="none" />
                    <path d="M5 5h3v5H5z" fill="#2f6fc4" stroke="none" />
                </StyleButton>
                <StyleButton label="Forma">
                    <path d="M5 6h10v8H5z" fill="#2f6fc4" stroke="none" />
                    <path d="m4 15 4-5 7-7" stroke="#d8e6f5" strokeWidth="2" />
                    <path d="M3 16c0-3 2-5 5-5 0 3-2 5-5 5z" fill="#6cb2f0" stroke="none" />
                </StyleButton>
                <StyleButton label="Cell St">
                    <path d="M3 4h10v8H3z" fill="#2f6fc4" stroke="none" />
                    <path d="m4 15 4-5 7-7" stroke="#d8e6f5" strokeWidth="2" />
                    <path d="M3 16c0-3 2-5 5-5 0 3-2 5-5 5z" fill="#6cb2f0" stroke="none" />
                </StyleButton>
            </div>
            <button aria-label="Scroll ribbon" className="w-[13px] flex items-center justify-center border border-[#6b6b6b]">
                <Icon w={4} h={6}>
                    <path d="m.5.5 2.500 2.500L.5 5.500" stroke="#fff" strokeWidth="1.500" />
                </Icon>
            </button>
            <button aria-label="Collapse ribbon" className="w-7 pb-[10px] flex items-end justify-center">
                <Chevron className="stroke-white" />
            </button>
        </div>
    );
}

function Dots() {
    return (
        <Icon w={2} h={12}>
            <path d="M0 0h2v2H0zM0 5h2v2H0zM0 10h2v2H0z" fill="#dcdcdc" stroke="none" />
        </Icon>
    );
}

function FormulaBar() {
    return (
        <div className="mt-2 ml-[7px] mr-[2px] h-[26px] shrink-0 flex items-center text-[13px] text-white">
            <div className="w-[102px] shrink-0 h-full px-[6px] flex items-center rounded border border-[#5f5f5f] bg-[#292929]">
                <input aria-label="Name box" defaultValue="D2" className="flex-1 min-w-0 bg-transparent outline-none" />
                <Chevron className="stroke-[#dcdcdc]" />
            </div>
            <span className="w-5 shrink-0 flex justify-center">
                <Dots />
            </span>
            <div className="w-[74px] shrink-0 h-full px-[6px] flex items-center justify-between rounded border border-[#5f5f5f] bg-[#292929]">
                <button aria-label="Cancel">
                    <Icon w={12} h={12}>
                        <path d="m0 0 12 12M12 0 0 12" stroke="#7a7a7a" />
                    </Icon>
                </button>
                <button aria-label="Enter">
                    <Icon w={15} h={12}>
                        <path d="m0 6 5 5L15 1" stroke="#7a7a7a" />
                    </Icon>
                </button>
                <button className="font-['Liberation_Serif',serif] italic text-lg leading-5">fx</button>
            </div>
            <div className="flex-1 min-w-0 ml-1 h-full px-1 flex items-center rounded border border-[#5f5f5f] bg-[#292929]">
                <input aria-label="Formula" className="flex-1 min-w-0 bg-transparent outline-none" />
                <Chevron className="stroke-[#dcdcdc]" />
            </div>
        </div>
    );
}

function SheetGrid() {
    const rows = Array.from({length: 22}, (_, i) => i + 1);

    return (
        <div className="mt-[7px] flex-1 min-h-0 flex overflow-hidden">
            <div className="flex-1 min-w-0 overflow-hidden">
                <table className="w-full table-fixed border-separate border-spacing-0 text-[13px] leading-[19px]">
                    <colgroup>
                        <col className="w-[25px]" />
                        {SHEET_COLUMNS.map((column) => (
                            <col key={column} className="w-16" />
                        ))}
                        <col />
                    </colgroup>
                    <thead>
                        <tr className="h-5 bg-[#0a0a0a] text-[#e0e0e0]">
                            <th className="p-0 border-r border-b border-[#5a5a5a]">
                                <Icon w={12} h={12} className="ml-auto mr-[3px]">
                                    <path d="M12 0v12H0z" fill="#6b6b6b" stroke="none" />
                                </Icon>
                            </th>
                            {SHEET_COLUMNS.map((column) => (
                                <th key={column} scope="col" className="p-0 font-normal border-r border-b border-[#5a5a5a]">
                                    {column}
                                </th>
                            ))}
                            <td className="p-0 border-b border-[#5a5a5a]" />
                        </tr>
                    </thead>
                    <tbody>
                        {rows.map((row) => (
                            <tr key={row} className="h-5 bg-white text-[#1a1a1a]">
                                <th scope="row" className="p-0 font-normal bg-[#0a0a0a] text-[#e0e0e0] border-r border-b border-[#5a5a5a]">
                                    {row}
                                </th>
                                {SHEET_COLUMNS.map((column, i) => (
                                    <td
                                        key={column}
                                        className={clsx(
                                            "px-[2px] py-0 border-r border-b border-[#dedede] font-['Liberation_Sans',sans-serif]",
                                            row === 2 && "text-right",
                                        )}
                                    >
                                        {SHEET_ROWS[row]?.[i]}
                                    </td>
                                ))}
                                <td className="p-0 border-b border-[#dedede]" />
                            </tr>
                        ))}
                    </tbody>
                </table>
            </div>
            <div className="w-[15px] shrink-0 pl-[5px] flex flex-col items-center bg-[#161616]">
                <Icon w={10} h={18}>
                    <path d="m5 6 5 7H0z" fill="#9c9c9c" stroke="none" />
                </Icon>
                <div className="flex-1 w-[9px] rounded-full bg-[#9c9c9c]" />
                <Icon w={10} h={24}>
                    <path d="m5 22 5-7H0z" fill="#9c9c9c" stroke="none" />
                </Icon>
            </div>
        </div>
    );
}

function SheetTabs() {
    return (
        <div className="h-8 shrink-0 pl-[27px] pr-3 flex items-center border-t border-[#4a4a4a]">
            <button aria-label="Previous sheet">
                <Icon w={6} h={10}>
                    <path d="M5.500 1 1 5l4.500 4" stroke="#b5b5b5" />
                </Icon>
            </button>
            <button aria-label="Next sheet" className="ml-7">
                <Icon w={6} h={10}>
                    <path d="M.5 1 5 5 .5 9" stroke="#b5b5b5" />
                </Icon>
            </button>
            <button className="w-[39px] h-7 ml-[47px] mb-1 pl-2 -mt-px rounded-l bg-white text-left text-[13px] font-semibold text-[#262626]">
                <span className="block leading-5 border-b-2 border-[#1f4d4a]">Shee</span>
            </button>
            <button aria-label="New sheet" className="ml-auto">
                <Icon w={11} h={11}>
                    <path d="M0 5.500h11M5.500 0v11" />
                </Icon>
            </button>
            <span className="w-[42px] pl-[26px]">
                <Dots />
            </span>
            <div className="w-[119px] h-[17px] px-[5px] flex items-center rounded-full bg-[#161616]">
                <Icon w={8} h={10}>
                    <path d="M8 0v10L1 5z" fill="#9c9c9c" stroke="none" />
                </Icon>
                <div className="ml-[5px] w-11 h-[9px] rounded-full bg-[#9c9c9c]" />
                <Icon w={8} h={10} className="ml-auto">
                    <path d="M0 0v10l7-5z" fill="#9c9c9c" stroke="none" />
                </Icon>
            </div>
        </div>
    );
}

function ExcelStatus() {
    return (
        <footer className="h-[23px] shrink-0 pl-[9px] pr-[13px] flex items-center bg-[#161616] border-y border-[#4a4a4a] text-[11px] text-white">
            <span className="w-16 pt-px font-semibold">Ready</span>
            <button aria-label="Normal view" className="w-10 h-full flex items-center justify-center bg-[#262626]">
                <Icon w={13} h={13}>
                    <path d="M.5.5h12v12H.5zM4.500 0v13M8.500 0v13M0 4.500h13M0 8.500h13" stroke="#fff" />
                </Icon>
            </button>
            <button aria-label="Page layout view" className="w-10 flex justify-center">
                <Icon w={14} h={13}>
                    <path d="M.5.5h13v12H.5zM3.500 2.500h7v8h-7zM5 4.500h4M5 6.500h4M5 8.500h4" stroke="#fff" />
                </Icon>
            </button>
            <button aria-label="Page break view" className="w-10 flex justify-center">
                <Icon w={14} h={13}>
                    <path d="M.5.5h13v12H.5zM4.500 0v7M9.500 0v7M0 7.500h10" stroke="#fff" />
                </Icon>
            </button>
            <button aria-label="Zoom out" className="ml-auto w-2 h-px bg-white" />
            <input
                type="range"
                aria-label="Zoom"
                className="w-[100px] h-[11px] mx-[5px] appearance-none bg-transparent [&::-webkit-slider-runnable-track]:h-px [&::-webkit-slider-runnable-track]:bg-[#9c9c9c] [&::-webkit-slider-thumb]:appearance-none [&::-webkit-slider-thumb]:w-[5px] [&::-webkit-slider-thumb]:h-[11px] [&::-webkit-slider-thumb]:-mt-[5px] [&::-webkit-slider-thumb]:bg-[#b5b5b5]"
            />
            <button aria-label="Zoom in">
                <Icon w={8} h={8}>
                    <path d="M0 4.500h8M4.500 0v8" stroke="#fff" />
                </Icon>
            </button>
            <span className="w-10 pt-px text-right">100%</span>
        </footer>
    );
}

function ExcelWindow() {
    return (
        <div className="min-w-0 h-full pb-[9px] bg-white">
            <div className="h-full flex flex-col bg-[#0a0a0a] border-t border-l border-[#5f5f5f]">
                <ExcelTitle />
                <ExcelTabs />
                <ExcelRibbon />
                <FormulaBar />
                <SheetGrid />
                <SheetTabs />
                <ExcelStatus />
            </div>
        </div>
    );
}

export default function App() {
    return (
        <div className="h-screen grid grid-cols-[922fr_380fr] grid-rows-[100%] overflow-hidden font-['Roboto','Noto_Sans',sans-serif]">
            <InventorWindow />
            <ExcelWindow />
        </div>
    );
}
